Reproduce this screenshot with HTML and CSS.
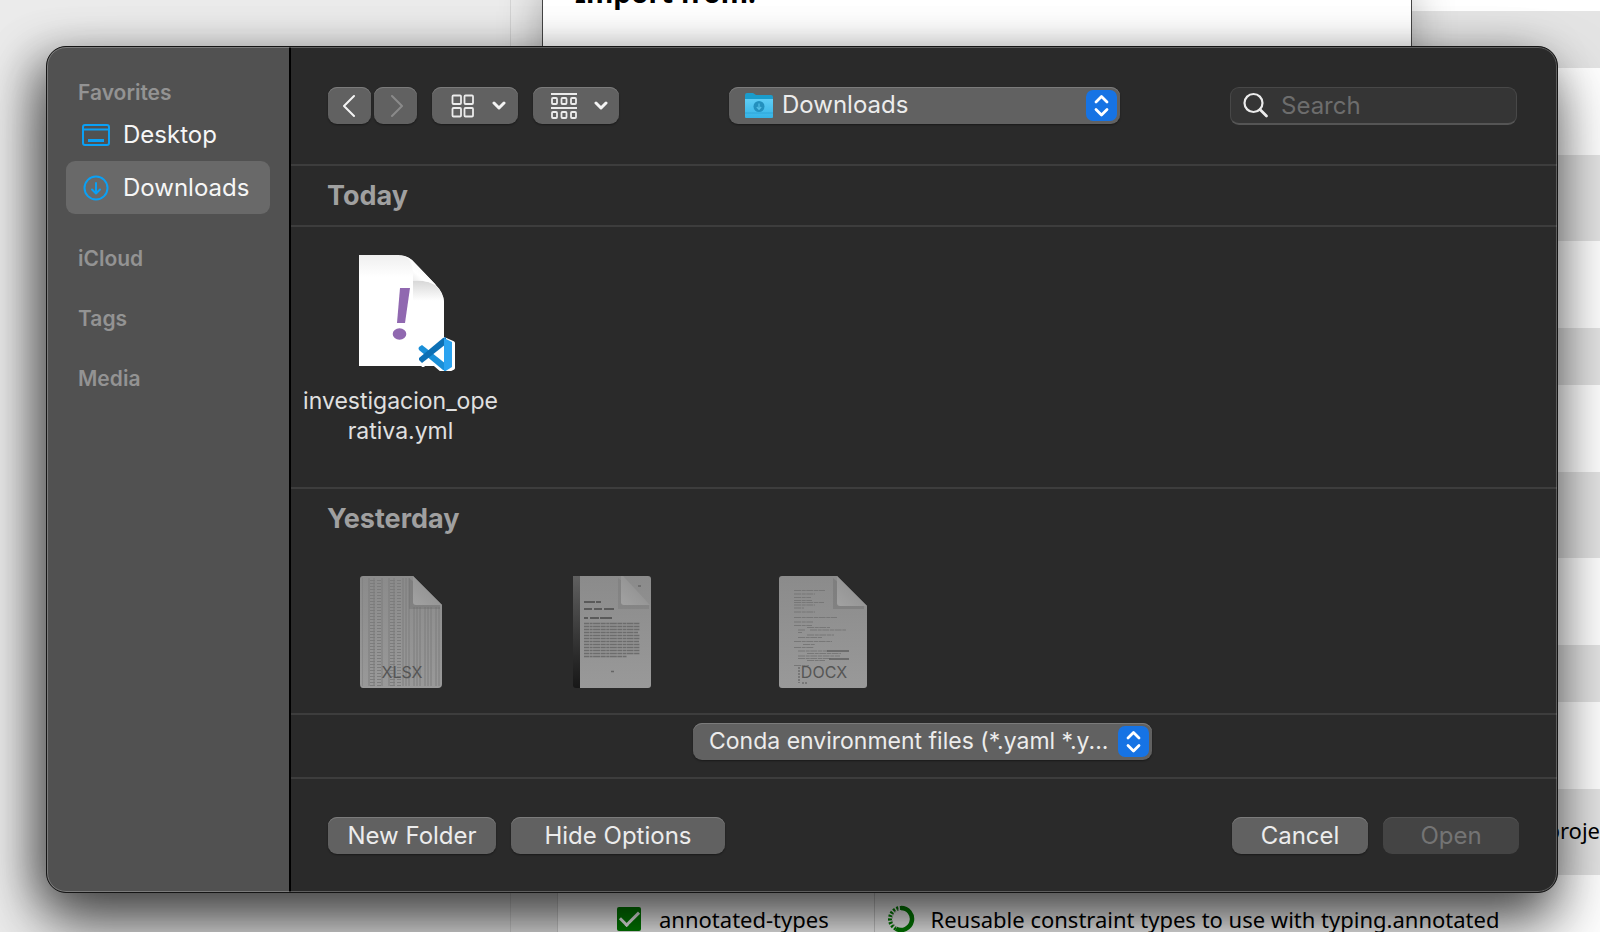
FILE: index.html
```html
<!DOCTYPE html>
<html lang="en">
<head>
<meta charset="utf-8">
<title>Open</title>
<link rel="stylesheet" href="styles.css">
</head>
<body>
<div class="backdrop">
  <div class="pane"></div>
  <div class="gutter"></div>
  <table class="packages">
    <tbody>
      <tr class="sliver"><td></td><td></td></tr>
      <tr class="short odd"><td></td><td></td></tr>
      <tr><td></td><td></td></tr>
      <tr class="odd"><td></td><td></td></tr>
      <tr><td></td><td></td></tr>
      <tr class="short odd"><td></td><td></td></tr>
      <tr><td></td><td></td></tr>
      <tr class="odd"><td></td><td></td></tr>
      <tr><td></td><td></td></tr>
      <tr class="short odd"><td></td><td></td></tr>
      <tr><td></td><td></td></tr>
      <tr class="odd"><td></td><td class="tail">proje</td></tr>
      <tr>
        <td>
          <label class="package"><input type="checkbox" class="tick" checked>annotated-types</label>
        </td>
        <td>
          <div class="about">
            <svg class="ring" viewBox="0 0 28 28" aria-hidden="true">
              <path d="M14 3a11 11 0 1 1-5 20.800" fill="none" stroke="#008300" stroke-width="4.500"/>
              <path d="M9 23.800A11 11 0 0 1 14 3" fill="none" stroke="#008300" stroke-width="4" stroke-dasharray="2 1.500"/>
              <path d="M10 22.500A10 10 0 0 1 14 4" fill="none" stroke="#b5b5b5" stroke-width="1.200" stroke-dasharray="1.500 2"/>
            </svg>
            Reusable constraint types to use with typing.annotated
          </div>
        </td>
      </tr>
    </tbody>
  </table>
</div>

<div class="sheet"><h2 class="sheet-title">Import from:</h2></div>

<div class="dialog" role="dialog" aria-label="Open">
  <nav class="sidebar">
    <h3 class="group">Favorites</h3>
    <a class="place" href="#desktop">
      <svg class="place-icon" viewBox="0 0 30 26" fill="none" stroke="#0aa0f5" stroke-width="2" aria-hidden="true">
        <rect x="2" y="3" width="26" height="20" rx="2"/><path d="M2 7.500h26"/><path d="M7 18.500h16" stroke-width="3"/>
      </svg>
      Desktop
    </a>
    <a class="place current" href="#downloads" aria-current="page">
      <svg class="place-icon" viewBox="0 0 30 26" fill="none" stroke="#0aa0f5" stroke-width="2" stroke-linecap="round" stroke-linejoin="round" aria-hidden="true">
        <circle cx="15" cy="13" r="11.500"/><path d="M15 8v10M11 14.500l4 4 4-4"/>
      </svg>
      Downloads
    </a>
    <h3 class="group later">iCloud</h3>
    <h3 class="group later">Tags</h3>
    <h3 class="group later">Media</h3>
  </nav>

  <div class="main">
    <div class="toolbar">
      <div class="tools">
        <div class="history">
          <button class="button step" aria-label="Back">
            <svg width="14" height="24" viewBox="0 0 14 24" fill="none" stroke="#f4f4f4" stroke-width="2" stroke-linecap="round" stroke-linejoin="round"><path d="M11 2L1 12l10 10"/></svg>
          </button>
          <button class="button step" aria-label="Forward" disabled>
            <svg width="14" height="24" viewBox="0 0 14 24" fill="none" stroke="#8a8a8a" stroke-width="2" stroke-linecap="round" stroke-linejoin="round"><path d="M3 2l10 10L3 22"/></svg>
          </button>
        </div>
        <button class="button view" aria-label="Icon view">
          <svg width="24" height="24" viewBox="0 0 24 24" fill="none" stroke="#ececec" stroke-width="1.800"><rect x="1.500" y="1.500" width="8.500" height="8.500" rx="1"/><rect x="13.500" y="1.500" width="8.500" height="8.500" rx="1"/><rect x="1.500" y="14" width="8.500" height="8.500" rx="1"/><rect x="13.500" y="14" width="8.500" height="8.500" rx="1"/></svg>
          <svg width="16" height="10" viewBox="0 0 16 10" fill="none" stroke="#f4f4f4" stroke-width="3" stroke-linecap="round" stroke-linejoin="round"><path d="M3 2l5 5 5-5"/></svg>
        </button>
        <button class="button view" aria-label="Group items">
          <svg width="26" height="28" viewBox="0 0 26 28" fill="none" stroke="#ececec" stroke-width="1.800"><path d="M0 2h26M0 16h26"/><rect x="1" y="6" width="5" height="6" rx="1"/><rect x="10.500" y="6" width="5" height="6" rx="1"/><rect x="20" y="6" width="5" height="6" rx="1"/><rect x="1" y="20" width="5" height="6" rx="1"/><rect x="10.500" y="20" width="5" height="6" rx="1"/><rect x="20" y="20" width="5" height="6" rx="1"/></svg>
          <svg width="16" height="10" viewBox="0 0 16 10" fill="none" stroke="#f4f4f4" stroke-width="3" stroke-linecap="round" stroke-linejoin="round"><path d="M3 2l5 5 5-5"/></svg>
        </button>
      </div>

      <div class="popup folder">
        <svg class="folder-icon" width="28" height="26" viewBox="0 0 28 26" aria-hidden="true">
          <defs><linearGradient id="front" x1="0" y1="0" x2="0" y2="1"><stop offset="0" stop-color="#5fcdf5"/><stop offset="1" stop-color="#35b3e6"/></linearGradient></defs>
          <path d="M0 2q0-2 2-2h6l3 2h15q2 0 2 2v6H0z" fill="#1a9ccc"/>
          <path d="M0 6h28v18q0 1-1 1H1q-1 0-1-1z" fill="url(#front)"/>
          <path d="M0 20h28" stroke="#2fa6d8" stroke-width="1"/>
          <circle cx="14" cy="13.500" r="5.500" fill="#2390be"/>
          <path d="M14 10.500v5.500M11.800 14l2.200 2.300 2.200-2.300" fill="none" stroke="#54bfe6" stroke-width="1.200"/>
        </svg>
        <select class="button choice" aria-label="Location"><option>Downloads</option></select>
        <svg class="stepper" viewBox="0 0 31 31" fill="none" stroke="#fff" stroke-width="2.800" stroke-linecap="round" stroke-linejoin="round" aria-hidden="true"><path d="M10 12l5.500-5.500L21 12M10 19.500l5.500 5.500 5.500-5.500"/></svg>
      </div>

      <label class="search">
        <svg width="26" height="26" viewBox="0 0 26 26" fill="none" stroke="#ececec" stroke-width="2.200" stroke-linecap="round" aria-hidden="true"><circle cx="10.500" cy="11" r="9"/><path d="M17 17.500l6.500 6.500" stroke-width="2.800"/></svg>
        <input class="query" type="text" placeholder="Search" aria-label="Search">
      </label>
    </div>

    <div class="files">
      <section class="day today">
        <h2 class="day-title ruled">Today</h2>
        <div class="items">
          <figure class="item">
            <svg class="file" viewBox="0 0 108 116" aria-hidden="true">
              <defs>
                <linearGradient id="page" x1="0" y1="0" x2="0" y2="1"><stop offset="0" stop-color="#efefef"/><stop offset=".2" stop-color="#fff"/></linearGradient>
                <linearGradient id="curl" x1="0" y1="1" x2="1" y2="0"><stop offset="0" stop-color="#d9d9d9"/><stop offset=".4" stop-color="#fff"/><stop offset="1" stop-color="#ececec"/></linearGradient>
                <linearGradient id="shade" x1="0" y1="0" x2="0" y2="1"><stop offset="0" stop-color="#d6d6d6"/><stop offset=".8" stop-color="#fff"/></linearGradient>
              </defs>
              <path d="M12 0h39q8 0 14 5l23 24q9 9 9 18v64H12z" fill="url(#page)"/>
              <path d="M66 25q18 0 25 8 6 7 6 18H66z" fill="url(#shade)"/>
              <path d="M57 1q9 4 9 17v8q14-1 23 4L65 5q-4-3-8-4z" fill="url(#curl)"/>
              <path d="M53 33h10l-5 35h-8z" fill="#9068b0"/>
              <ellipse cx="52.500" cy="79" rx="6.800" ry="5.800" fill="#9068b0"/>
              <path d="M72 97l4-5 7 4 14-12 9 4v25l-9 4-14-12-7 5-4-5z" fill="#fff" stroke="#fff" stroke-width="4" stroke-linejoin="round"/>
              <path d="M72 92l3-2 24 19v7l-3-1-24-20q-1-2 0-3z" fill="#1a8fd8"/>
              <path d="M72 105l3 3 24-19v-7l-3 1-24 20z" fill="#0d70b5"/>
              <path d="M97 83l8 4v25l-8 5z" fill="#2ba3f0"/>
            </svg>
            <figcaption class="name">investigacion_ope<br>rativa.yml</figcaption>
          </figure>
        </div>
      </section>

      <section class="day">
        <h2 class="day-title">Yesterday</h2>
        <div class="items">
          <figure class="item">
            <svg class="file" viewBox="0 0 108 116" aria-hidden="true">
              <defs>
                <linearGradient id="grey" x1="0" y1="0" x2="0" y2="1"><stop offset="0" stop-color="#8b8b8b"/><stop offset="1" stop-color="#999"/></linearGradient>
                <linearGradient id="fold" x1="0" y1="1" x2="1" y2="0"><stop offset="0" stop-color="#a2a2a2"/><stop offset="1" stop-color="#8a8a8a"/></linearGradient>
                <pattern id="cells" width="20" height="3" patternUnits="userSpaceOnUse"><path d="M2 0v3M7 0v3M15 0v3" stroke="#7c7c7c" stroke-width="1"/><path d="M3 1.500h5M10 1.500h4" stroke="#7c7c7c" stroke-width="1"/></pattern>
                <pattern id="columns" width="11" height="3" patternUnits="userSpaceOnUse"><path d="M1 0v3M4 0v3M7 0v3" stroke="#7c7c7c" stroke-width="1"/></pattern>
              </defs>
              <path d="M16 0h50l29 29v79q0 4-4 4H16q-3 0-3-4V3q0-3 3-3z" fill="url(#grey)"/>
              <path d="M15 2h39v108H15z" fill="url(#cells)"/>
              <path d="M54 2h12v29h27v79H54z" fill="url(#columns)"/>
              <path d="M62 2v31h31v-4z" fill="#666" opacity=".35"/>
              <path d="M66 0l29 29H69q-3 0-3-3z" fill="url(#fold)"/>
              <text class="kind" x="55" y="102">XLSX</text>
            </svg>
          </figure>
          <figure class="item">
            <svg class="file" viewBox="0 0 108 116" aria-hidden="true">
              <defs><linearGradient id="spine" x1="0" y1="0" x2="0" y2="1"><stop offset="0" stop-color="#606060"/><stop offset=".6" stop-color="#333"/><stop offset="1" stop-color="#171717"/></linearGradient></defs>
              <path d="M15 0h8v112h-5q-3 0-3-3z" fill="url(#spine)"/>
              <path d="M22 0h68q3 0 3 3v106q0 3-3 3H22z" fill="url(#grey)"/>
              <path d="M60 2v31h31v-5z" fill="#666" opacity=".25"/>
              <path d="M63 0h2l27 29H66q-3 0-3-3z" fill="url(#fold)"/>
              <path d="M26 26h11M38 26h5M26 33h8M36 33h8M46 33h10M26 42h4M32 42h9M42 42h12" stroke="#5a5a5a" stroke-width="2"/>
              <path d="M26 47.500h56M26 50.500h56M26 53.500h56M26 56.500h54M26 59.500h56M26 62.500h56M26 65.500h55M26 68.500h56M26 71.500h56M26 74.500h56M26 77.500h56M26 80.500h43" stroke="#6c6c6c" stroke-width="1.300" stroke-dasharray="5 .6 3 .5 7 .6"/>
              <path d="M53 95.500h3M80 10h3" stroke="#666" stroke-width="1.500"/>
            </svg>
          </figure>
          <figure class="item">
            <svg class="file" viewBox="0 0 108 116" aria-hidden="true">
              <path d="M13 0h55l30 30v79q0 3-3 3H13q-3 0-3-3V3q0-3 3-3z" fill="url(#grey)"/>
              <path d="M64 2v31h31v-4z" fill="#666" opacity=".35"/>
              <path d="M68 0l30 30H71q-3 0-3-3z" fill="url(#fold)"/>
              <path d="M25 14.500h31M25 18h21M25 21.500h17M25 24.500h18M25 26.500h30M25 29h21M25 32h10M25 36h21M25 41.500h43M25 46h19M25 49.500h18M38 51.500h23M29 54h7M41 54h36M29 56.500h4M38 59h27M29 61.500h24M25 65.500h38M34 68.500h12M25 71.500h20M29 75h30M38 77.500h34M29 80h42M29 82.500h33M38 84.500h18M25 89.500h15" stroke="#777" stroke-width="1.200" stroke-dasharray="7 .7 4 .6"/>
              <path d="M58 75h22M60 83h20" stroke="#5f5f5f" stroke-width="1.300"/>
              <path d="M30 91v16M33 107h6" stroke="#777" stroke-width="2" stroke-dasharray="2 1"/>
              <text class="kind" x="55" y="102">DOCX</text>
            </svg>
          </figure>
        </div>
      </section>
    </div>

    <div class="options">
      <div class="popup filter">
        <select class="button choice" aria-label="File type"><option>Conda environment files (*.yaml *.y...</option></select>
        <svg class="stepper" viewBox="0 0 31 31" fill="none" stroke="#fff" stroke-width="2.800" stroke-linecap="round" stroke-linejoin="round" aria-hidden="true"><path d="M10 12l5.500-5.500L21 12M10 19.500l5.500 5.500 5.500-5.500"/></svg>
      </div>
    </div>

    <div class="footer">
      <button class="button new-folder">New Folder</button>
      <button class="button hide-options">Hide Options</button>
      <button class="button answer push">Cancel</button>
      <button class="button answer" disabled>Open</button>
    </div>
  </div>
</div>
</body>
</html>
```

FILE: styles.css
```css
* { box-sizing: border-box; }

body {
  margin: 0;
  position: relative;
  min-height: 100vh;
  overflow: hidden;
  font-family: Inter, "Liberation Sans", sans-serif;
  font-size: 24px;
  color: #ececec;
}

h2, h3, figure { margin: 0; }

/* Application window behind the dialog */
.backdrop {
  display: flex;
  height: 100vh;
  overflow: hidden;
  background: #ebebeb;
  color: #000;
  font-family: "Noto Sans", sans-serif;
  font-size: 22px;
  line-height: 24px;
}
.pane { flex: 0 0 511px; border-right: 1px solid #d6d6d6; }
.gutter { flex: 0 0 47px; border-right: 1px solid #d6d6d6; }
.packages {
  flex: 1;
  display: table;
  border-collapse: collapse;
  table-layout: fixed;
  background: #fff;
  align-self: flex-start;
  white-space: nowrap;
}
.packages td { padding: 0; height: 87px; overflow: hidden; }
.packages td:first-child { width: 316px; border-right: 1px solid #d6d6d6; }
.packages .odd { background: #e4e4e4; }
.packages .odd td { height: 86px; }
.packages .short td { height: 57px; }
.packages .sliver td { height: 11px; }
.packages .tail { text-align: right; padding-bottom: 4px; }
.package { display: flex; align-items: center; gap: 18px; padding-left: 59px; }
.tick {
  appearance: none;
  display: grid;
  place-items: center;
  width: 24px;
  height: 24px;
  margin: 0;
  border-radius: 2px;
  background: #008300;
}
.tick::after {
  content: "";
  width: 16px;
  height: 8px;
  border: solid #fff;
  border-width: 0 0 3px 3px;
  rotate: -45deg;
  margin-bottom: 5px;
}
.about { display: flex; align-items: center; gap: 16px; padding-left: 12px; }
.ring { width: 28px; height: 28px; flex: none; }

.sheet {
  position: absolute;
  top: -29px;
  left: 542px;
  right: 188px;
  height: 600px;
  padding-left: 32px;
  background: #fff;
  border: 1px solid #444;
  color: #000;
  box-shadow: 0 20px 40px rgba(0, 0, 0, .3);
}
.sheet-title { font: 700 28px/40px "Noto Sans", sans-serif; }

/* File dialog */
.dialog {
  position: absolute;
  top: 46px;
  left: 46px;
  right: 42px;
  display: flex;
  border: 1px solid #151515;
  border-radius: 20px;
  overflow: hidden;
  background: #2a2a2a;
  box-shadow: 0 32px 60px rgba(0, 0, 0, .6), -14px 8px 44px rgba(0, 0, 0, .35);
}
.dialog::after {
  content: "";
  position: absolute;
  inset: 0;
  border: 1px solid rgba(255, 255, 255, .25);
  border-radius: 19px;
  pointer-events: none;
}

.sidebar {
  flex: 0 0 244px;
  padding: 31px 19px;
  background: #515151;
  border-right: 2px solid #000;
}
.group {
  padding-left: 12px;
  font-size: 21px;
  line-height: 30px;
  font-weight: 600;
  color: #939393;
}
.later { margin-top: 30px; }
.place {
  display: flex;
  align-items: center;
  gap: 12px;
  padding-left: 15px;
  line-height: 53px;
  border-radius: 9px;
  color: #f6f6f6;
  text-decoration: none;
}
.current { background: #696969; }
.place-icon { width: 30px; height: 26px; }

.main { flex: 1; min-width: 0; }
.toolbar {
  display: flex;
  align-items: center;
  justify-content: space-between;
  padding: 40px 40px 40px 37px;
  border-bottom: 2px solid #3d3d3d;
}
.tools { display: flex; gap: 15px; }
.history { display: flex; gap: 3px; }

.button {
  height: 37px;
  padding: 0;
  border: 0;
  border-radius: 9px;
  background: #616161;
  box-shadow: inset 0 1px 0 #7b7b7b, 0 1px 2px rgba(0, 0, 0, .4);
  color: #ececec;
  font: inherit;
}
.step { display: grid; place-items: center; width: 43px; }
.view { display: flex; align-items: center; justify-content: center; gap: 16px; padding-left: 8px; width: 86px; }

.popup { display: grid; align-items: center; }
.popup > * { grid-area: 1 / 1; }
.choice { appearance: none; width: 100%; padding: 0 36px 2px 16px; }
.folder { width: 391px; }
.folder .choice { padding-left: 53px; }
.folder-icon { z-index: 1; margin-left: 16px; pointer-events: none; }
.filter { width: 459px; font-size: 23px; }
.stepper {
  justify-self: end;
  width: 31px;
  height: 31px;
  margin-right: 3px;
  border-radius: 7px;
  background: #1673e4;
  pointer-events: none;
}

.search {
  display: flex;
  align-items: center;
  gap: 12px;
  width: 287px;
  height: 38px;
  padding: 0 12px;
  border: 1px solid #484848;
  border-bottom: 2px solid #555;
  border-radius: 9px;
  background: #353535;
}
.query { flex: 1; min-width: 0; padding: 0; border: 0; outline: 0; background: none; color: #ececec; font: inherit; }
.query::placeholder { color: #6d6d6d; }

.toolbar { height: 119px; }
.files { height: 547px; overflow: hidden; }
.today { border-bottom: 2px solid #3d3d3d; }
.day-title { padding-left: 36px; font-size: 27px; line-height: 59px; font-weight: 700; color: #a0a0a0; }
.ruled { border-bottom: 2px solid #3d3d3d; }
.items { display: flex; height: 260px; padding: 28px 4px 0; }
.item { flex: 0 0 211px; display: flex; flex-direction: column; align-items: center; gap: 15px; }
.file { width: 108px; height: 116px; }
.name { font-size: 23px; line-height: 30px; text-align: center; color: #e0e0e0; }
.kind { font: 16px Inter, sans-serif; fill: #555; text-anchor: middle; }

.options {
  display: flex;
  justify-content: center;
  padding: 8px 3px 17px 0;
  border: solid #3d3d3d;
  border-width: 2px 0;
}
.footer { display: flex; gap: 15px; padding: 38px 38px 38px 37px; }
.new-folder { width: 168px; }
.hide-options { width: 214px; }
.answer { width: 136px; }
.push { margin-left: auto; }
.answer:disabled { background: #444; box-shadow: inset 0 1px 0 #525252; color: #747474; }
```
